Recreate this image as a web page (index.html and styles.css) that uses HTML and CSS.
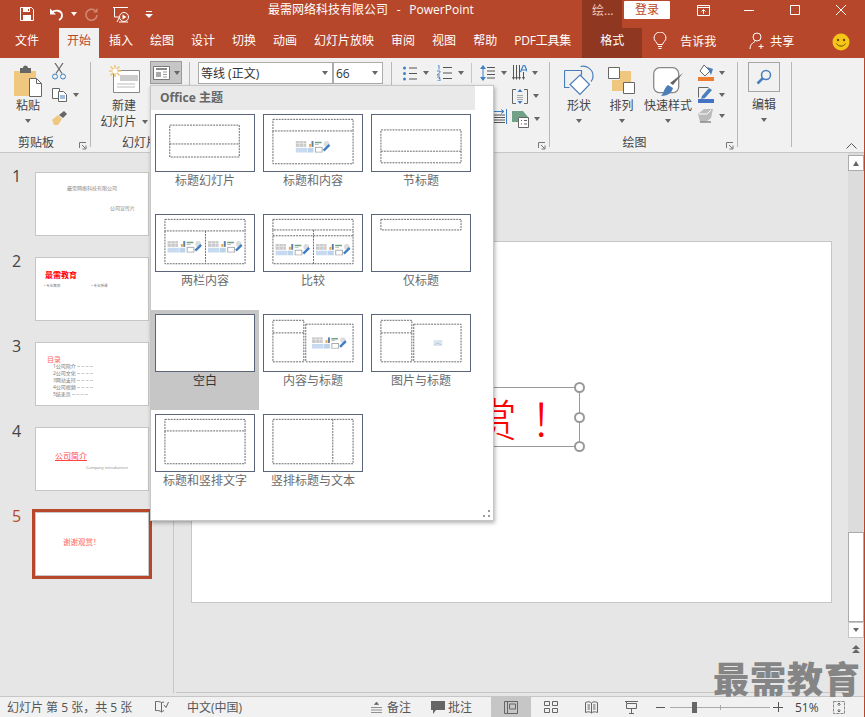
FILE: index.html
```html
<!DOCTYPE html>
<html lang="zh-CN">
<head>
<meta charset="utf-8">
<title>最需网络科技有限公司 - PowerPoint</title>
<link rel="stylesheet" href="styles.css">
</head>
<body>
<svg class="defs" width="0" height="0">
  <symbol id="content" viewBox="0 0 36 12">
    <rect x="0" y="0" width="11" height="6" fill="#c9c9c9"/><path d="M0 2.5h11M4 0v6M8 0v6" stroke="#eee" stroke-width=".7"/>
    <rect x="0" y="7" width="12" height="5" fill="#c7daf0"/>
    <rect x="14" y="3" width="2" height="3" fill="#e6a64c"/><rect x="16.500" y="0" width="2" height="6" fill="#5b7fa8"/>
    <rect x="12.500" y="7" width="6" height="5" fill="#bcd3ec"/>
    <path d="M20 1.500h7" stroke="#6fa287" stroke-width="1.500"/><path d="M20 3.500h4" stroke="#bbb"/>
    <rect x="20.500" y="6.500" width="7" height="5" fill="#fff" stroke="#aaa"/>
    <circle cx="32" cy="3" r="3" fill="#ddd"/><path d="M29 10l6-6" stroke="#3f7fc4" stroke-width="2.500"/>
  </symbol>
  <symbol id="launch" viewBox="0 0 8 8"><path d="M.5 6V.5H7M3 3l3.500 3.500M7 3.500V7H3.500" fill="none" stroke="#777"/></symbol>
</svg>
<div class="app">
  <header class="titlebar">
    <div class="qat">
      <span class="qi qi-save"><svg width="14" height="14" viewBox="0 0 14 14"><path d="M.5.500h11l2 2v11H.500z" fill="none" stroke="#fff"/><path d="M3 1h7v4H3zM3 8h8v5H3z" fill="#fff"/><path d="M8 2h1v2H8z" fill="#b7472a"/></svg></span>
      <span class="qi qi-undo"><svg width="15" height="14" viewBox="0 0 15 14"><path d="M2 6.500c3-4 11-4 11 2 0 2-1 3.500-3 4.500" fill="none" stroke="#fff" stroke-width="1.800"/><path d="M1 1.500v6h6z" fill="#fff"/></svg><i class="caret caret-w"></i></span>
      <span class="qi qi-redo"><svg width="14" height="14" viewBox="0 0 14 14"><path d="M10 3.500a5.500 5.500 0 1 0 2 4.500" fill="none" stroke="#cf8a75" stroke-width="1.600"/><path d="M12.500 1v4.500H8z" fill="#cf8a75"/></svg></span>
      <span class="qi qi-show"><svg width="17" height="17" viewBox="0 0 17 17"><path d="M0 1.500h15M1.500 1.500V11H6M4 16l2-4" fill="none" stroke="#fff"/><circle cx="11" cy="11" r="4.500" fill="none" stroke="#fff"/><path d="M9.500 8.500v5l4-2.500z" fill="#fff"/><path d="M6 16h9" stroke="#fff"/></svg></span>
      <span class="qi qi-more"><svg width="8" height="9" viewBox="0 0 8 9"><path d="M1 1.500h6" stroke="#fff"/><path d="M0 4h8L4 8z" fill="#fff"/></svg></span>
    </div>
    <div class="doc-title">最需网络科技有限公司&nbsp; - &nbsp;PowerPoint</div>
    <div class="ctx-head">绘...</div>
    <div class="login">登录</div>
    <div class="winbtns">
      <span class="wb"><svg width="13" height="11" viewBox="0 0 13 11"><path d="M.5.500h12v10H.500zM.5 2.500h12M6.500 9V4.500M4.500 6.500l2-2 2 2" fill="none" stroke="#fff"/></svg></span>
      <span class="wb"><svg width="10" height="1" viewBox="0 0 10 1"><path d="M0 .5h10" stroke="#fff"/></svg></span>
      <span class="wb"><svg width="10" height="10" viewBox="0 0 10 10"><path d="M.5.500h9v9h-9z" fill="none" stroke="#fff"/></svg></span>
      <span class="wb"><svg width="10" height="10" viewBox="0 0 10 10"><path d="M0 0l10 10M10 0L0 10" stroke="#fff"/></svg></span>
    </div>
  </header>

  <nav class="tabs">
    <span class="tab tab-file">文件</span>
    <span class="tab tab-on">开始</span>
    <span class="tab">插入</span>
    <span class="tab">绘图</span>
    <span class="tab">设计</span>
    <span class="tab">切换</span>
    <span class="tab">动画</span>
    <span class="tab">幻灯片放映</span>
    <span class="tab">审阅</span>
    <span class="tab">视图</span>
    <span class="tab">帮助</span>
    <span class="tab tab-pdf">PDF工具集</span>
    <span class="tab tab-ctx">格式</span>
    <span class="tell"><svg width="14" height="18" viewBox="0 0 14 18"><path d="M4.500 12.500C4 10 1 9 1 6a6 6 0 0 1 12 0c0 3-3 4-3.500 6.500zM5 14.500h4M5.500 16.500h3" fill="none" stroke="#fff"/></svg><span>告诉我</span></span>
    <span class="share"><svg width="16" height="18" viewBox="0 0 16 18"><circle cx="8" cy="5" r="4" fill="none" stroke="#fff"/><path d="M1 17c0-4 2-6 5-7.500M12 12v5M9.500 14.500h5" fill="none" stroke="#fff"/></svg><span>共享</span></span>
    <span class="smile"><svg width="18" height="18" viewBox="0 0 18 18"><circle cx="9" cy="9" r="8.500" fill="#f5c518"/><circle cx="6" cy="7" r="1.200" fill="#6b4a00"/><circle cx="12" cy="7" r="1.200" fill="#6b4a00"/><path d="M4.500 10.500c2 3.500 7 3.500 9 0" fill="none" stroke="#6b4a00"/></svg></span>
  </nav>

  <section class="ribbon">
    <div class="rg rg-clip">
      <div class="rg-body">
        <div class="big big-paste">
          <svg class="big-ic" width="29" height="32" viewBox="0 0 29 32"><path d="M0 6h22v25H0z" fill="#f0c77f"/><path d="M6 3h3a2.500 2.500 0 0 1 5 0h3v5H6z" fill="#666"/><path d="M15.500 13.500h7l5 5v13h-12z" fill="#fff" stroke="#666"/><path d="M22.500 13.500v5h5" fill="none" stroke="#666"/></svg>
          <span class="big-t">粘贴</span><i class="caret"></i>
        </div>
        <div class="clip-col">
          <span class="ci"><svg width="14" height="17" viewBox="0 0 14 17"><path d="M3 0l7 10.500M11 0L4 10.500" stroke="#666" stroke-width="1.200"/><circle cx="3" cy="13.500" r="2.500" fill="none" stroke="#3f7fc4"/><circle cx="11" cy="13.500" r="2.500" fill="none" stroke="#3f7fc4"/></svg></span>
          <span class="ci"><svg width="15" height="14" viewBox="0 0 15 14"><path d="M.5.500h7v10h-7z" fill="#fff" stroke="#666"/><path d="M6.500 3.500h5l3 3v7h-8z" fill="#fff" stroke="#666"/><path d="M8 8h5M8 10h5" stroke="#3f7fc4"/></svg><i class="caret caret-l"></i></span>
          <span class="ci"><svg width="16" height="14" viewBox="0 0 16 14"><path d="M0 9l6-5 4 4-4 6H2z" fill="#f0c77f"/><path d="M7 4l5-4 3 3-4 4z" fill="#666"/></svg></span>
        </div>
      </div>
      <div class="rg-label rg-label-l">剪贴板<svg class="launch"><use href="#launch"/></svg></div>
    </div>
    <i class="sep"></i>
    <div class="rg rg-slides">
      <div class="rg-body">
        <div class="big big-new">
          <svg class="big-ic" width="31" height="28" viewBox="0 0 31 28"><path d="M4.500 5.500h26v22h-26z" fill="#fff" stroke="#888"/><path d="M11 10h18v6H11z" fill="#ccc"/><path d="M8 19h18M8 22h18" stroke="#bbb"/><path d="M6 0v12M0 6h12M1.500 1.500l9 9M10.500 1.500l-9 9" stroke="#f0c77f" stroke-width="1.600"/><circle cx="6" cy="6" r="2.500" fill="#fff"/></svg>
          <span class="big-t">新建</span>
          <span class="big-t big-t2">幻灯片<i class="caret caret-l"></i></span>
        </div>
        <div class="layout-btn"><svg width="17" height="14" viewBox="0 0 17 14"><path d="M.5.500h16v13H.500z" fill="#fff" stroke="#777"/><path d="M3 3h11" stroke="#888" stroke-width="2"/><path d="M3 6h5v5H3z" fill="#aaa"/><path d="M10 6h4M10 8.500h4M10 11h4" stroke="#999"/></svg><i class="caret"></i></div>
      </div>
      <div class="rg-label">幻灯片</div>
    </div>
    <i class="sep"></i>
    <div class="rg rg-font">
      <div class="rg-body">
        <div class="combo combo-font"><span>等线 (正文)</span><i class="caret"></i></div>
        <div class="combo combo-size"><span>66</span><i class="caret"></i></div>
      </div>
      <div class="rg-label">字体</div>
    </div>
    <i class="sep sep-font"></i>
    <div class="rg rg-para">
      <div class="rg-body">
        <div class="para-left">
          <div class="para-row">
            <span class="ic ic-list"><svg width="14" height="15" viewBox="0 0 14 15"><path d="M6 2h8M6 7.500h8M6 13h8" stroke="#555"/><circle cx="1.500" cy="2" r="1.500" fill="#3f7fc4"/><circle cx="1.500" cy="7.500" r="1.500" fill="#3f7fc4"/><circle cx="1.500" cy="13" r="1.500" fill="#3f7fc4"/></svg><i class="caret"></i></span>
            <span class="ic ic-num"><svg width="15" height="16" viewBox="0 0 15 16"><path d="M6 2.500h9M6 8h9M6 13.500h9" stroke="#555"/><path d="M1 1l1-.5V4.500M0 6h3v1.500L0 10h3M0 12h3l-1 1.500h1V16H0" fill="none" stroke="#3f7fc4" stroke-width=".9"/></svg><i class="caret"></i></span>
            <i class="sep-sm"></i>
            <span class="ic ic-ls"><svg width="15" height="16" viewBox="0 0 15 16"><path d="M7 2.500h8M7 6h8M7 9.500h8M7 13h8" stroke="#555"/><path d="M3 1v14" stroke="#3f7fc4"/><path d="M0 4l3-4 3 4zM0 12l3 4 3-4z" fill="#3f7fc4"/></svg><i class="caret"></i></span>
          </div>
          <div class="para-just"><svg width="14" height="16" viewBox="0 0 14 16"><path d="M0 6h12M0 8.500h12M0 11h12M0 13.500h12" stroke="#555"/><path d="M0 2.500h11M8 .5l3 2-3 2M13.500 0v15" fill="none" stroke="#3f7fc4"/></svg></div>
        </div>
        <div class="para-right">
          <span class="ic"><svg width="15" height="16" viewBox="0 0 15 16"><path d="M1.500 0v13M4.500 0v13M7.500 0v13M11.500 7v6" stroke="#555"/><path d="M0 12l1.500 3 1.500-3zM3 12l1.500 3 1.500-3zM6 12l1.500 3 1.500-3zM10 12l1.500 3 1.500-3z" fill="#555"/><path d="M8.500 7l3-7h1l3 7M10 5h4" fill="none" stroke="#3f7fc4" stroke-width="1.200"/></svg><i class="caret"></i></span>
          <span class="ic"><svg width="16" height="15" viewBox="0 0 16 15"><path d="M4 .5H.5v14H4M12 .5h3.500v14H12" fill="none" stroke="#666"/><path d="M5 6.500h6M5 8.500h6M5 10.500h6" stroke="#aaa"/><path d="M8 0L5.500 3h5zM8 15l-2.500-3h5z" fill="#3f7fc4"/></svg><i class="caret"></i></span>
          <span class="ic"><svg width="17" height="17" viewBox="0 0 17 17"><path d="M0 0h11l5 6H6v5H0z" fill="#6fa287"/><path d="M6.500 6.500h10v10h-10z" fill="#fff" stroke="#666"/><path d="M9 9.500h1M12 9.500h3M9 13h1M12 13h3" stroke="#666"/></svg><i class="caret"></i></span>
        </div>
      </div>
      <div class="rg-label rg-label-l">段落<svg class="launch"><use href="#launch"/></svg></div>
    </div>
    <i class="sep"></i>
    <div class="rg rg-draw">
      <div class="rg-body">
        <div class="big big-shape">
          <svg class="big-ic" width="30" height="31" viewBox="0 0 30 31"><path d="M16.500 1.500C22 0 29.500 4 29 11.500c0 2-1 4-2 5" fill="none" stroke="#4a7ebb" stroke-width="1.200"/><path d="M.5 5.500h17v5M.5 5.500v17h5" fill="none" stroke="#4a7ebb" stroke-width="1.200"/><path d="M16 10l9.500 9.500-9.500 10-10-10z" fill="#fff" stroke="#4a7ebb" stroke-width="1.200"/></svg>
          <span class="big-t">形状</span><i class="caret"></i>
        </div>
        <div class="big big-arr">
          <svg class="big-ic" width="27" height="27" viewBox="0 0 27 27"><path d="M12 4h11v11H12zM4 13h11v11H4z" fill="#f0c77f"/><path d="M.5.500h11v11H.500zM15.500 15.500h11v11h-11z" fill="#fff" stroke="#666"/></svg>
          <span class="big-t">排列</span><i class="caret"></i>
        </div>
        <div class="big big-quick">
          <svg class="big-ic" width="31" height="30" viewBox="0 0 31 30"><rect x=".7" y=".7" width="25" height="25" rx="6" fill="#fff" stroke="#888" stroke-width="1.300"/><path d="M30 6l-10 12-3-2z" fill="#666"/><path d="M8 29c2-1 3-8 7-11l5 3c-1 4-4 8-12 8z" fill="#4a7ebb"/></svg>
          <span class="big-t">快速样式</span><i class="caret"></i>
        </div>
        <div class="draw-col">
          <span class="ic"><svg width="16" height="16" viewBox="0 0 16 16"><path d="M6 0l6 6-5 5-5-5z" fill="#fff" stroke="#666"/><path d="M9 2l6 2-2 6z" fill="#4a7ebb"/><path d="M0 12h16v4H0z" fill="#ed7d31"/></svg><i class="caret"></i></span>
          <span class="ic"><svg width="16" height="16" viewBox="0 0 16 16"><path d="M10.500 .5H.500v10" fill="none" stroke="#666"/><path d="M4 9l7-8 3 2-7 8-4 1z" fill="#4a7ebb"/><path d="M0 12h16v4H0z" fill="#4472c4"/></svg><i class="caret"></i></span>
          <span class="ic"><svg width="16" height="14" viewBox="0 0 16 14"><path d="M0 5l6-5h9l-2 9-5 4H2z" fill="#bbb"/><path d="M1 5h8l4-4" fill="none" stroke="#fff"/><path d="M2 13h11" stroke="#888" stroke-width="1.500"/></svg><i class="caret"></i></span>
        </div>
      </div>
      <div class="rg-label rg-label-l">绘图<svg class="launch"><use href="#launch"/></svg></div>
    </div>
    <i class="sep"></i>
    <div class="rg rg-edit">
      <div class="edit-btn"><svg width="16" height="16" viewBox="0 0 16 16"><circle cx="10" cy="6" r="4.500" fill="none" stroke="#4a7ebb" stroke-width="1.500"/><path d="M1.500 14.500L7 9" stroke="#4a7ebb" stroke-width="2.500"/></svg></div>
      <span class="big-t">编辑</span><i class="caret"></i>
    </div>
    <i class="sep"></i>
    <svg class="collapse" width="11" height="6" viewBox="0 0 11 6"><path d="M.5 5.500l5-5 5 5" fill="none" stroke="#555"/></svg>
  </section>

  <main class="workspace">
    <aside class="slides">
      <div class="sl"><span class="sl-n">1</span><div class="sl-t t1"><p class="t1a">最需网络科技有限公司</p><p class="t1b">公司宣传片</p></div></div>
      <div class="sl"><span class="sl-n">2</span><div class="sl-t t2"><p class="t2a">最需教育</p><div class="t2b"><span>• 专业教师</span><span>• 专业授课</span></div></div></div>
      <div class="sl"><span class="sl-n">3</span><div class="sl-t t3"><p class="t3a">目录</p><ol class="t3l"><li>1公司简介</li><li>2公司文化</li><li>3网站支持</li><li>4公司视频</li><li>5结束页</li></ol></div></div>
      <div class="sl"><span class="sl-n">4</span><div class="sl-t t4"><p class="t4a">公司简介</p><p class="t4b">Company introduction</p></div></div>
      <div class="sl sl-on"><span class="sl-n">5</span><div class="sl-t t5"><p>谢谢观赏！</p></div></div>
    </aside>
    <div class="editor">
      <div class="canvas">
        <div class="slide">
          <div class="textbox">
            <span class="tb-text">谢谢观赏<span class="tb-bang">！</span></span>
            <i class="hd hd-t"></i><i class="hd hd-m"></i><i class="hd hd-b"></i>
          </div>
        </div>
      </div>
      <div class="vscroll">
        <div class="vs-btn vs-up"><i class="caret caret-up"></i></div>
        <div class="vs-track"></div>
        <div class="vs-thumb"></div>
        <div class="vs-btn"><i class="caret"></i></div>
        <div class="vs-page"><svg width="8" height="9" viewBox="0 0 8 9"><path d="M4 0L0 4h8zM4 4L0 8h8z" fill="#666"/></svg></div>
      </div>
    </div>
  </main>

  <footer class="status">
    <span class="st-text">幻灯片 第 5 张，共 5 张</span>
    <span class="st-book"><svg width="14" height="12" viewBox="0 0 14 12"><path d="M6.500 1.500C5 .5 3 .5.500.5v9c2.500 0 4.500 0 6 1.500V1.500zM6.500 11c.7-.7 1.500-1 2.500-1.300M9 1l-2.500.5" fill="none" stroke="#666"/><path d="M9 4l2 2.500L13.500 1" fill="none" stroke="#666"/></svg></span>
    <span class="st-lang">中文(中国)</span>
    <span class="st-btn"><svg width="11" height="11" viewBox="0 0 11 11"><path d="M5.500 0l2 2.500h-4zM0 5.500h11M0 8h11M0 10.500h11" fill="#666" stroke="#666" stroke-width=".7"/></svg>备注</span>
    <span class="st-btn st-btn-c"><svg width="14" height="13" viewBox="0 0 14 13"><path d="M0 0h14v9H5l-3 4V9H0z" fill="#666"/></svg>批注</span>
    <span class="st-view st-view-on"><svg width="14" height="13" viewBox="0 0 14 13"><path d="M.5.500h13v12H.500zM3.500.500v12M5.500 3h6v5h-6z" fill="none" stroke="#666"/></svg></span>
    <span class="st-view"><svg width="14" height="12" viewBox="0 0 14 12"><path d="M.5.500h5v4h-5zM8.500.500h5v4h-5zM.5 7.500h5v4h-5zM8.500 7.500h5v4h-5z" fill="none" stroke="#666"/></svg></span>
    <span class="st-view"><svg width="13" height="13" viewBox="0 0 13 13"><path d="M.5 1.500C3 .5 5 .5 6.500 2 8 .5 10 .5 12.500 1.500v10C10 10.500 8 10.500 6.500 12 5 10.500 3 10.500.5 11.500zM6.500 2v10M2.500 4h2.500M2.500 6h2.500M2.500 8h2.500M8 4h2.500M8 6h2.500M8 8h2.500" fill="none" stroke="#666"/></svg></span>
    <span class="st-view"><svg width="13" height="13" viewBox="0 0 13 13"><path d="M0 .5h13M1.500 .5v1.500M1.500 2.500h10v5h-10zM6.500 7.500v5M4 12.500h5" fill="none" stroke="#666"/></svg></span>
    <span class="st-zoom">
      <i class="z-minus"></i>
      <span class="z-track"><i class="z-tick"></i><i class="z-thumb"></i></span>
      <i class="z-plus"></i>
    </span>
    <span class="st-pct">51%</span>
    <span class="st-fit"><svg width="12" height="13" viewBox="0 0 12 13"><path d="M.5.500h11v12H.500z" fill="none" stroke="#888" stroke-dasharray="3 1"/><path d="M6 2v3M4.500 3.500L6 2l1.500 1.500M6 11V8M4.500 9.500L6 11l1.500-1.500" fill="none" stroke="#666"/></svg></span>
  </footer>

  <div class="gallery">
    <div class="gal-head">Office 主题</div>
    <div class="gal-grid">
      <div class="gi"><svg class="gt" viewBox="0 0 100 58"><path class="d" d="M13.500 10.500h72v33h-72zM13.500 30h72"/></svg><span>标题幻灯片</span></div>
      <div class="gi"><svg class="gt" viewBox="0 0 100 58"><path class="d" d="M8.500 4.500h83v12h-83zM8.500 16.500v34h83v-34"/><use href="#content" x="32" y="27" width="36" height="12"/></svg><span>标题和内容</span></div>
      <div class="gi"><svg class="gt" viewBox="0 0 100 58"><path class="d" d="M8.500 15.500h83v34h-83zM8.500 37.500h83"/></svg><span>节标题</span></div>
      <div class="gi"><svg class="gt" viewBox="0 0 100 58"><path class="d" d="M8.500 4.500h83v12h-83zM8.500 16.500v34h83v-34M50.500 16.500v34"/><use href="#content" x="11" y="27" width="36" height="12"/><use href="#content" x="53" y="27" width="36" height="12"/></svg><span>两栏内容</span></div>
      <div class="gi"><svg class="gt" viewBox="0 0 100 58"><path class="d" d="M8.500 4.500h83v11h-83zM8.500 15.500v35h83v-35M8.500 21.500h83M50.500 15.500v35"/><use href="#content" x="11" y="30" width="36" height="12"/><use href="#content" x="53" y="30" width="36" height="12"/></svg><span>比较</span></div>
      <div class="gi"><svg class="gt" viewBox="0 0 100 58"><path class="d" d="M8.500 4.500h83v11h-83z"/></svg><span>仅标题</span></div>
      <div class="gi gi-on"><svg class="gt" viewBox="0 0 100 58"></svg><span>空白</span></div>
      <div class="gi"><svg class="gt" viewBox="0 0 100 58"><path class="d" d="M8.500 5.500h32v43h-32zM8.500 18.500h32M42.500 9.500h49v39h-49z"/><use href="#content" x="49" y="23" width="36" height="12"/></svg><span>内容与标题</span></div>
      <div class="gi"><svg class="gt" viewBox="0 0 100 58"><path class="d" d="M8.500 5.500h32v43h-32zM8.500 18.500h32M42.500 9.500h49v39h-49z"/><rect x="63" y="26" width="9" height="6" fill="#dbe6f3"/><path d="M64 31l3-2 4 2" stroke="#aaa" fill="none" stroke-width=".6"/></svg><span>图片与标题</span></div>
      <div class="gi"><svg class="gt" viewBox="0 0 100 58"><path class="d" d="M8.500 4.500h83v12h-83zM8.500 16.500v34h83v-34"/></svg><span>标题和竖排文字</span></div>
      <div class="gi"><svg class="gt" viewBox="0 0 100 58"><path class="d" d="M8.500 4.500h83v46h-83zM70.500 4.500v46"/></svg><span>竖排标题与文本</span></div>
    </div>
    <svg class="grip" width="7" height="7" viewBox="0 0 7 7"><path d="M5 0h2v2H5zM0 5h2v2H0zM5 5h2v2H5z" fill="#999"/></svg>
  </div>

  <div class="watermark">最需教育</div>
</div>
</body>
</html>
```
FILE: styles.css
```css
* { box-sizing: border-box; }
html, body { margin: 0; padding: 0; }
body { width: 865px; height: 717px; overflow: hidden; font-family: "Open Sans", "Noto Sans CJK SC", sans-serif; font-size: 12px; color: #444; background: #e6e6e6; }
p, ol { margin: 0; padding: 0; list-style: none; }
i { display: block; font-style: normal; }
svg { display: block; flex: none; }
.defs { position: absolute; }
.app { position: relative; width: 865px; height: 717px; display: flex; flex-direction: column; border-right: 1px solid #b7472a; overflow: hidden; }

.caret { width: 0; height: 0; border-left: 3.5px solid transparent; border-right: 3.5px solid transparent; border-top: 4px solid #666; flex: none; }
.caret-w { border-top-color: #fff; margin-left: 7px; }
.caret-l { margin-left: 6px; }
.caret-up { border-top: 0; border-bottom: 5px solid #666; }

/* title bar */
.titlebar { height: 28px; background: #b7472a; display: flex; color: #fff; flex: none; }
.qat { width: 268px; padding-left: 13px; display: flex; align-items: center; }
.qi { display: flex; align-items: center; justify-content: center; height: 28px; }
.qi-save { width: 28px; }
.qi-undo { width: 40px; justify-content: flex-start; padding-left: 8px; }
.qi-redo { width: 22px; }
.qi-show { width: 36px; }
.qi-more { width: 20px; }
.doc-title { width: 314px; line-height: 20px; white-space: nowrap; word-spacing: 1.25px; }
.ctx-head { width: 40px; background: #8f3720; line-height: 22px; padding-left: 10px; color: #f2c9bb; }
.login { width: 46px; height: 18px; margin: 1px 0 0 2px; background: #fff; color: #b7472a; text-align: center; line-height: 18px; border-radius: 1px; }
.winbtns { display: flex; margin-left: 10px; }
.wb { width: 46px; height: 20px; display: flex; align-items: center; justify-content: center; }

/* tabs */
.tabs { height: 30px; background: #b7472a; display: flex; align-items: center; color: #fff; flex: none; }
.tab { height: 30px; line-height: 26px; padding: 0 7px 0 10px; white-space: nowrap; }
.tab-file { width: 59px; padding: 0 0 0 15px; }
.tab-on { width: 40px; padding: 0; text-align: center; background: #f1f1f1; color: #b7472a; }
.tab-pdf { width: 78px; letter-spacing: -.2px; }
.tab-ctx { width: 60px; padding: 0; margin-left: 0; text-align: center; background: #8f3720; }
.tell { display: flex; align-items: center; margin-left: 11px; gap: 13px; height: 30px; padding-bottom: 4px; }
.share { display: flex; align-items: center; margin-left: 33px; gap: 5px; height: 30px; padding-bottom: 4px; }
.smile { margin-left: 38px; padding-bottom: 3px; }

/* ribbon */
.ribbon { height: 95px; background: #f1f1f1; display: flex; align-items: flex-start; padding-top: 4px; border-bottom: 1px solid #c6c6c6; flex: none; position: relative; }
.sep { width: 1px; height: 85px; background: #b9b9b9; flex: none; }
.rg { display: flex; flex-direction: column; flex: none; position: relative; height: 89px; }
.rg-body { height: 73px; display: flex; align-items: flex-start; }
.rg-label { height: 16px; line-height: 16px; text-align: center; white-space: nowrap; }
.rg-label-l { padding-right: 18px; }
.launch { position: absolute; right: 3px; bottom: 1px; width: 8px; height: 8px; }
.rg-clip { width: 90px; }
.rg-slides { width: 98px; }
.rg-font { width: 201px; }
.rg-para { width: 157px; }
.rg-draw { width: 187px; }
.rg-edit { width: 53px; align-items: center; padding-right: 1px; }

.big { display: flex; flex-direction: column; align-items: center; flex: none; }
.big-ic { height: 33px; padding: 0; }
.big-t { height: 16px; line-height: 16px; white-space: nowrap; display: flex; align-items: center; }
.big .caret { margin-top: 5px; }
.big-t2 .caret { margin: 0 0 0 5px; }
.big-paste { width: 30px; margin: 3px 0 0 13px; }
.big-paste .big-ic { height: 32px; }
.big-paste .big-t { margin-top: 1px; }
.clip-col { margin: -2px 0 0 7px; display: flex; flex-direction: column; }
.ci { height: 23px; display: flex; align-items: center; padding-left: 2px; }
.big-new { width: 48px; margin: 3px 0 0 9px; }
.big-new .big-ic { height: 28px; margin-bottom: 5px; }
.layout-btn { width: 32px; height: 23px; margin: -1px 0 0 2px; background: #c6c6c6; border: 1px solid #9a9a9a; display: flex; align-items: center; padding-left: 2px; gap: 4px; }

.rg-font .rg-body { padding-left: 8px; }
.combo { height: 22px; background: #fff; border: 1px solid #ababab; display: flex; align-items: center; justify-content: space-between; padding: 0 4px 0 2px; color: #333; white-space: nowrap; }
.combo-font { width: 135px; }
.combo-size { width: 50px; margin-left: 0; }

.ic { display: flex; align-items: center; gap: 6px; flex: none; }
.para-left { width: 118px; padding-left: 11px; }
.para-row { display: flex; align-items: center; height: 20px; margin-top: 1px; }
.ic-list { width: 34px; }
.ic-num { width: 34px; }
.sep-sm { width: 1px; height: 20px; background: #c6c6c6; margin-right: 8px; }
.para-just { display: flex; justify-content: flex-end; padding: 26px 3px 0 0; }
.para-right { margin: 3px 0 0 2px; display: flex; flex-direction: column; gap: 7px; }
.para-right .ic { height: 16px; gap: 5px; }

.big-shape { width: 40px; margin: 3px 0 0 9px; }
.big-shape .big-ic { height: 31px; margin-bottom: 2px; }
.big-arr { width: 45px; margin: 5px 0 0 0; }
.big-arr .big-ic { height: 27px; margin-bottom: 4px; }
.big-quick { width: 48px; margin: 5px 0 0 0; }
.big-quick .big-ic { height: 30px; margin-bottom: 1px; }
.draw-col { margin: 3px 0 0 6px; display: flex; flex-direction: column; gap: 6px; }
.draw-col .ic { gap: 5px; }
.edit-btn { width: 32px; height: 30px; margin-top: 0; border: 1px solid #a6a6a6; display: flex; align-items: center; justify-content: center; margin-bottom: 5px; }
.rg-edit .caret { margin-top: 5px; }
.collapse { position: absolute; left: 846px; top: 85px; }

/* workspace */
.workspace { height: 543px; display: flex; flex: none; background: #e6e6e6; }
.slides { width: 174px; height: 540px; border-right: 1px solid #c6c6c6; padding-top: 19px; flex: none; }
.sl { display: flex; height: 64px; margin-bottom: 21px; }
.sl-n { width: 35px; padding-left: 12px; font-size: 16px; line-height: 20px; margin-top: -6px; color: #444; }
.sl-t { width: 114px; height: 64px; background: #fff; border: 1px solid #c6c6c6; position: relative; overflow: hidden; line-height: 1; white-space: nowrap; }
.sl-on .sl-n { color: #b7472a; }
.sl-on .sl-t { outline: 3px solid #b7472a; }
.t1 { font-size: 5px; color: #888; }
.t1a { padding: 13px 0 0 31px; }
.t1b { padding: 15px 0 0 74px; }
.t2a { padding: 13px 0 0 9px; font-size: 8px; font-weight: 700; color: #f00; }
.t2b { display: flex; gap: 31px; font-size: 3.5px; padding: 5px 0 0 8px; color: #777; }
.t3a { padding: 13px 0 0 11px; font-size: 7px; color: #f66; }
.t3l { padding: 0 0 0 17px; font-size: 5px; color: #777; }
.t3l li { height: 7px; line-height: 7px; display: flex; align-items: center; }
.t3l li::after { content: ""; width: 16px; border-top: 1px dashed #ccc; margin-left: 1px; }
.t4a { padding: 24px 0 1px 19px; font-size: 8px; color: #f44; text-decoration: underline; }
.t4b { padding: 5px 0 0 50px; font-size: 4px; color: #888; }
.t5 p { padding: 26px 0 0 27px; font-size: 7.500px; color: #f66; }

.editor { flex: 1; display: flex; min-width: 0; height: 543px; }
.canvas { flex: 1; height: 540px; border-bottom: 1px solid #c6c6c6; margin-left: 2px; padding: 88px 0 0 16px; min-width: 0; }
.slide { width: 641px; height: 362px; margin-left: -1px; background: #fff; border: 1px solid #c6c6c6; position: relative; }
.textbox { position: absolute; left: 131px; top: 145px; width: 257px; height: 60px; border: 1px solid #999; display: flex; align-items: center; justify-content: flex-end; padding-right: 4px; }
.tb-text { font-family: "Noto Sans CJK SC", sans-serif; font-weight: 300; font-size: 45px; line-height: 1; color: #f00; white-space: nowrap; }
.tb-bang { margin-left: 13px; }
.hd { position: absolute; right: -6px; width: 11px; height: 11px; border-radius: 50%; background: #fff; border: 2px solid #999; }
.hd-t { top: -6px; }
.hd-m { top: 24px; }
.hd-b { top: 53px; }
.vscroll { width: 16px; flex: none; padding-top: 2px; display: flex; flex-direction: column; align-items: stretch; background: linear-gradient(#dcdcdc 484px, #e6e6e6 484px); }
.vs-btn { height: 16px; background: #fff; border: 1px solid #c6c6c6; display: flex; align-items: center; justify-content: center; }
.vs-up { border: 1px solid #ababab; }
.vs-track { height: 361px; }
.vs-thumb { height: 90px; background: #fff; border: 1px solid #ababab; }
.vs-page { padding: 7px 0 0 4px; }

/* status */
.status { height: 21px; flex: none; background: #f1f1f1; border-top: 1px solid #c6c6c6; margin-top: 0; display: grid; grid-template-columns: 155px 32px 184px 60px 60px 40px 40px 40px 40px 144px 30px 28px; align-items: center; color: #555; white-space: nowrap; position: relative; }
.st-text { padding-left: 7px; }
.st-btn { display: flex; align-items: center; gap: 5px; }
.st-btn-c { gap: 3px; }
.st-view { height: 20px; display: flex; align-items: center; justify-content: center; }
.st-view-on { background: #c6c6c6; }
.st-zoom { display: flex; align-items: center; padding-left: 5px; height: 20px; }
.z-minus { width: 9px; height: 1px; background: #555; }
.z-track { width: 100px; height: 1px; background: #aaa; margin: 0 3px 0 5px; position: relative; }
.z-tick { position: absolute; left: 50px; top: -2px; width: 1px; height: 5px; background: #aaa; }
.z-thumb { position: absolute; left: 22px; top: -5px; width: 5px; height: 11px; background: #666; }
.z-plus { width: 10px; height: 10px; background: linear-gradient(#555,#555) center/10px 1px no-repeat, linear-gradient(#555,#555) center/1px 10px no-repeat; }
.st-pct { color: #444; }
.st-fit { padding-left: 8px; }

/* layout gallery */
.gallery { position: absolute; left: 150px; top: 85px; width: 344px; height: 436px; background: #fff; border: 1px solid #c6c6c6; box-shadow: 1px 2px 4px rgba(0,0,0,.3); }
.gal-head { width: 324px; height: 24px; background: #e9e9e9; padding-left: 9px; font-weight: 700; line-height: 24px; color: #666; }
.gal-grid { display: grid; grid-template-columns: repeat(3, 108px); grid-auto-rows: 100px; }
.gi { padding: 4px 4px 0; text-align: center; color: #6b6b6b; line-height: 18px; white-space: nowrap; }
.gi-on { background: #c6c6c6; color: #333; }
.gt { width: 100px; height: 58px; background: #fff; border: 1px solid #5b6579; }
.d { fill: none; stroke: #666; stroke-width: 1; stroke-dasharray: 2 1; }
.grip { position: absolute; right: 3px; bottom: 3px; }

.watermark { position: absolute; left: 713px; top: 660px; font-family: "Noto Sans CJK SC", sans-serif; font-weight: 900; font-size: 36px; line-height: 34px; letter-spacing: 1px; color: #858585; white-space: nowrap; }
```
